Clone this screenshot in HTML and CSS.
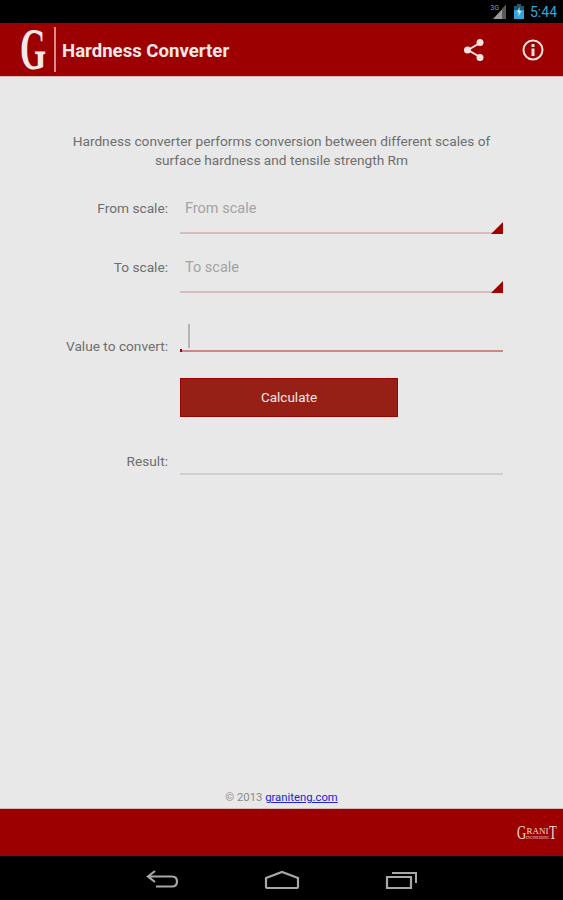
FILE: index.html
```html
<!DOCTYPE html>
<html lang="en">
<head>
    <meta charset="UTF-8">
    <meta name="viewport" content="width=device-width, initial-scale=1.0">
    <title>Hardness Converter</title>
    <link rel="stylesheet" href="styles.css">
</head>
<body>
    <div class="status-bar">
        <span class="net-label">3G</span>
        <svg class="signal" width="14" height="15" viewBox="0 0 14 15"><path d="M13 1v14H0z" fill="#9a9a9a"/><path d="M13 1v14H9V5z" fill="#5a5a5a"/></svg>
        <svg class="battery" width="10" height="15" viewBox="0 0 10 15"><path d="M3 0h4v2h3v13H0V2h3z" fill="#33a5d8"/><path d="M3 0h4v2h3v4H0V2h3z" fill="#1d5a70"/><path d="M5.500 3 3 8.500h2L4 13l3.500-6h-2z" fill="#d4eef8"/></svg>
        <span class="clock">5:44</span>
    </div>

    <header class="app-bar">
        <span class="logo-g">G</span>
        <span class="logo-rule"></span>
        <h1 class="app-title">Hardness Converter</h1>
        <svg class="action share" width="24" height="24" viewBox="0 0 24 24">
            <path d="M18 5 6 12l12 7" fill="none" stroke="#f3e2e2" stroke-width="2"/>
            <circle cx="18" cy="4.500" r="3.500" fill="#f3e2e2"/>
            <circle cx="5.500" cy="12" r="3.500" fill="#f3e2e2"/>
            <circle cx="18" cy="19.500" r="3.500" fill="#f3e2e2"/>
        </svg>
        <svg class="action info" width="24" height="24" viewBox="0 0 24 24">
            <circle cx="12" cy="12" r="9.500" fill="none" stroke="#f3e2e2" stroke-width="2"/>
            <rect x="10.500" y="10.500" width="3" height="7.500" fill="#f3e2e2"/>
            <rect x="10.500" y="6" width="3" height="3" fill="#f3e2e2"/>
        </svg>
    </header>

    <main class="content">
        <p class="intro">Hardness converter performs conversion between different scales of<br>surface hardness and tensile strength Rm</p>

        <div class="form">
            <div class="row row-select">
                <label class="label">From scale:</label>
                <div class="field select"><span class="placeholder">From scale</span></div>
            </div>
            <div class="row row-select">
                <label class="label">To scale:</label>
                <div class="field select"><span class="placeholder">To scale</span></div>
            </div>
            <div class="row row-input">
                <label class="label">Value to convert:</label>
                <div class="field input"><span class="cursor"></span></div>
            </div>
            <div class="row row-button">
                <span></span>
                <div><button class="btn">Calculate</button></div>
            </div>
            <div class="row row-result">
                <label class="label">Result:</label>
                <div class="field result"></div>
            </div>
        </div>

        <div class="copyright">© 2013 <a href="#">graniteng.com</a></div>
    </main>

    <footer class="bottom-bar">
        <div class="granit">
            <span class="granit-cap">G</span>
            <div class="granit-mid">
                <span class="granit-name">RANI</span>
                <span class="granit-sub">ENGINEERING</span>
            </div>
            <span class="granit-cap">T</span>
        </div>
    </footer>

    <nav class="nav-bar">
        <svg width="34" height="22" viewBox="0 0 34 22"><path d="M9 2 2 7.500 9 13M2 7.500h24q5 0 5 5t-5 5H10" fill="none" stroke="#a8a8a8" stroke-width="2.200"/></svg>
        <svg width="36" height="20" viewBox="0 0 36 20"><path d="M2 8 18 2l16 6v9q0 1-1 1H3q-1 0-1-1z" fill="none" stroke="#a8a8a8" stroke-width="2.200"/></svg>
        <svg width="34" height="20" viewBox="0 0 34 20"><path d="M3 7h24v11H3z" fill="none" stroke="#a8a8a8" stroke-width="2.200"/><path d="M8 3h24v10" fill="none" stroke="#a8a8a8" stroke-width="2"/></svg>
    </nav>
</body>
</html>
```

FILE: styles.css
```css
body {
    margin: 0;
    height: 900px;
    display: flex;
    flex-direction: column;
    background-color: #e8e8e8;
    font-family: Roboto, sans-serif;
    overflow: hidden;
}
.status-bar {
    height: 23px;
    background-color: #000;
    display: flex;
    align-items: center;
    justify-content: flex-end;
    padding-right: 6px;
}
.net-label {
    font-size: 7px;
    color: #999;
    margin-right: -6px;
    margin-top: -8px;
}
.signal {
    margin-right: 7px;
}
.battery {
    margin-right: 6px;
}
.clock {
    font-size: 14px;
    color: #33a5d8;
    padding-top: 1px;
}
.app-bar {
    height: 54px;
    background-color: #9c0000;
    display: flex;
    align-items: center;
    border-bottom: 1px solid #d9b8b8;
    box-sizing: border-box;
}
.logo-g {
    width: 26px;
    margin-left: 20px;
    font-family: "Liberation Serif", serif;
    font-size: 60px;
    font-weight: 700;
    line-height: 53px;
    color: #f5e8e8;
    transform: scaleX(0.56);
    transform-origin: left center;
}
.logo-rule {
    width: 2px;
    height: 45px;
    margin-left: 8px;
    background-color: #d98a8a;
}
.app-title {
    margin: 2px 0 0 6px;
    flex: 1;
    font-size: 18.600px;
    font-weight: 700;
    color: #f5e8e8;
}
.share {
    margin-right: 35px;
}
.info {
    margin-right: 18px;
}
.content {
    flex: 1;
    display: flex;
    flex-direction: column;
    padding-top: 55px;
    color: #6e6e6e;
}
.intro {
    margin: 0 0 6px;
    font-size: 13.700px;
    line-height: 18.500px;
    text-align: center;
}
.form {
    flex: 1;
}
.row {
    display: grid;
    grid-template-columns: 168px 323px;
    column-gap: 12px;
}
.label {
    font-size: 13.700px;
    text-align: right;
}
.row-select {
    height: 59px;
    align-items: end;
}
.row-select .label {
    align-self: start;
    margin-top: 25px;
}
.field {
    box-sizing: border-box;
    border-bottom: 2px solid #d9bcbc;
}
.select {
    height: 43px;
    padding: 7px 0 0 5px;
    position: relative;
}
.select::after {
    content: "";
    position: absolute;
    right: 0;
    bottom: -2px;
    border-style: solid;
    border-width: 0 0 12px 12px;
    border-color: transparent transparent #a00000 transparent;
}
.placeholder {
    font-size: 14.500px;
    color: #a3a3a3;
}
.row-input {
    height: 59px;
    align-items: end;
}
.row-input .label {
    margin-bottom: -2px;
}
.input {
    height: 31px;
    padding: 3px 0 0 8px;
    border-bottom-color: #c9898a;
    position: relative;
}
.input::before {
    content: "";
    position: absolute;
    left: 0;
    bottom: -2px;
    width: 2px;
    height: 3px;
    background-color: #a00000;
}
.cursor {
    display: block;
    width: 2px;
    height: 24px;
    background-color: #b4b4b4;
}
.row-button {
    margin-top: 26px;
}
.btn {
    display: block;
    width: 218px;
    height: 39px;
    padding: 0 0 2px;
    border: 1px solid #9c0000;
    background-color: #962016;
    color: #f5e8e8;
    font-family: Roboto, sans-serif;
    font-size: 13.500px;
}
.row-result {
    margin-top: 31px;
    height: 27px;
    align-items: end;
}
.row-result .label {
    padding-bottom: 6px;
}
.result {
    height: 27px;
    border-bottom-color: #cfcfcf;
}
.copyright {
    height: 17px;
    font-size: 11.300px;
    text-align: center;
    color: #8a8a8a;
}
.copyright a {
    color: #2222dd;
}
.bottom-bar {
    height: 48px;
    background-color: #9c0000;
    border-top: 1px solid #d9b8b8;
    box-sizing: border-box;
    display: flex;
    justify-content: flex-end;
    align-items: center;
    padding-right: 6px;
}
.granit {
    display: flex;
    align-items: center;
    width: 40px;
    margin-top: 1px;
    color: #f0dcdc;
    font-family: "Liberation Serif", serif;
}
.granit-cap {
    width: 9px;
    font-size: 18px;
    line-height: 14px;
    transform: scaleX(0.7);
    transform-origin: left center;
}
.granit-mid {
    display: flex;
    flex-direction: column;
    align-items: center;
    width: 23px;
}
.granit-name {
    font-size: 9px;
    line-height: 10.500px;
}
.granit-sub {
    font-size: 3.500px;
    line-height: 4px;
}
.nav-bar {
    height: 44px;
    background-color: #000;
    display: flex;
    align-items: center;
    box-sizing: border-box;
    padding: 3px 0 0 146px;
    gap: 84px;
}
```
